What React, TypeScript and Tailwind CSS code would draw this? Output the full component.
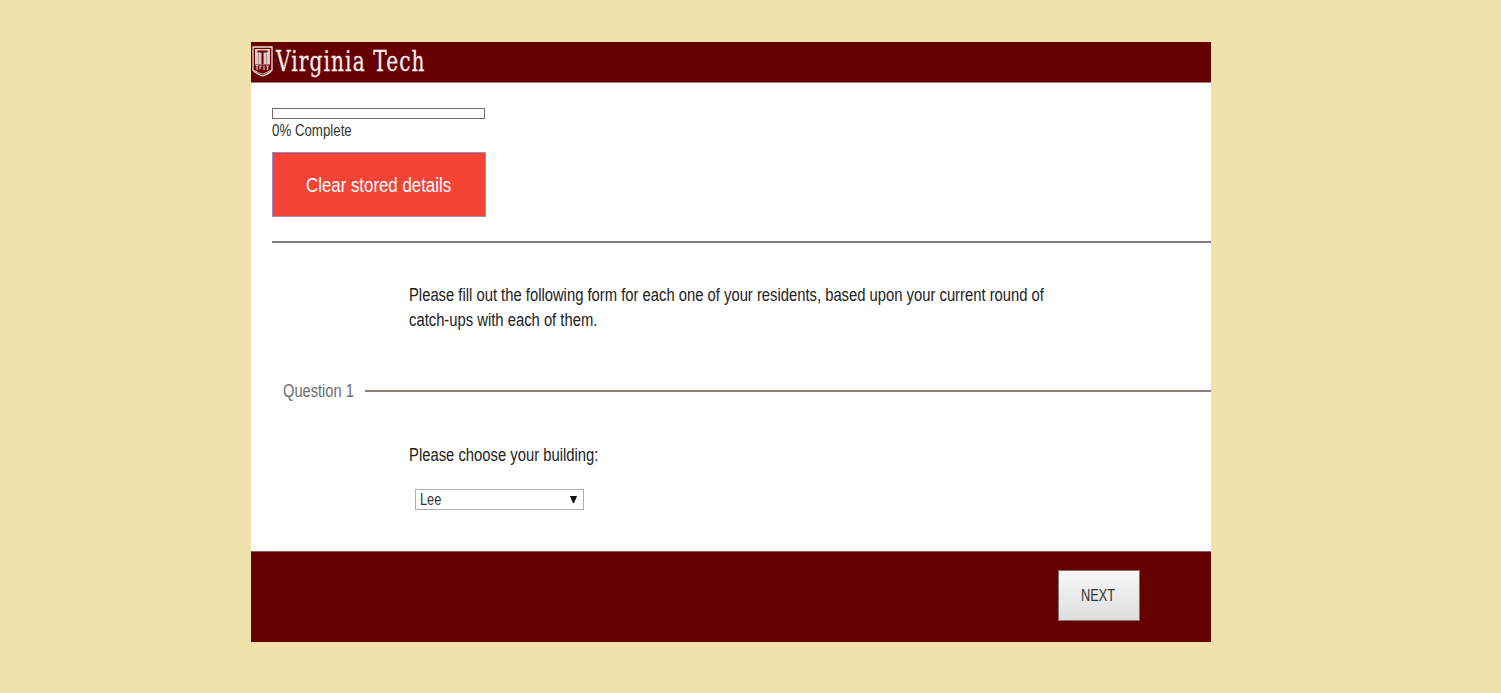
import React, { useState } from "react";

const narrow = "inline-block origin-left whitespace-nowrap";

function Shield() {
  return (
    <svg className="h-[31px] w-[21px] shrink-0" viewBox="0 0 21 31" fill="none">
      <path d="M1 1H20V24Q17 28 10.500 30Q4 28 1 24Z" stroke="#f3dede" strokeWidth="1.300" />
      <path d="M3 3H18V18.500H3Z" fill="#e2c8c8" />
      <path d="M5.500 4.500H15.500V6.500H11.500V18H9.500V6.500H5.500Z" fill="#660000" />
      <path d="M6.500 8V17.500M14.500 8V17.500" stroke="#b98d8d" strokeWidth="1" />
      <path d="M3.500 19.500H6.500M5 19.500V24M8 19.500V23.500M8 20H10M12 19.500V24M14 20H17M15.500 20V24" stroke="#dfc2c2" strokeWidth="1.200" />
      <path d="M3 24.500Q6 27 10.500 28Q15 27 18 24.500" stroke="#d8b8b8" strokeWidth="1" />
    </svg>
  );
}

export default function App() {
  const [building] = useState("Lee");
  return (
    <div className="h-[693px] bg-[#efe2ad] pt-[42px] pl-[251px] font-['Liberation_Sans',Arial,sans-serif] text-[#333]">
      <main className="flex h-[600px] w-[960px] flex-col overflow-hidden bg-white">
        <header className="flex h-[41px] shrink-0 items-start border-b border-[#a58080] bg-[#660000] pt-[4px] pl-px">
          <Shield />
          <h1 className={`${narrow} ml-[3px] -mt-[2px] scale-x-[0.72] font-['DejaVu_Serif',serif] text-[28px] leading-[36px] tracking-[1.5px] text-[#f8eded] [-webkit-text-stroke:0.3px_#f8eded]`}>
            Virginia Tech
          </h1>
        </header>

        <section className="ml-[21px] flex h-[160px] shrink-0 flex-col items-start border-b-2 border-[#8b7b7b] pt-[25px]">
          <div className="h-[11px] w-[213px] border-[1.5px] border-[#806565]" />
          <p className={`${narrow} mt-[3px] scale-x-[0.83] text-[16px] leading-[18px]`}>0% Complete</p>
          <button className="mt-[12px] h-[65px] w-[214px] border border-[#a08bc4] bg-[#f54336] pt-[2px] pl-[33px] text-left text-white">
            <span className={`${narrow} scale-x-[0.842] text-[20px] leading-[24px]`}>Clear stored details</span>
          </button>
        </section>

        <section className="h-[136px] shrink-0 pt-[40px] pl-[158px] text-[18px] leading-[25px] text-[#222]">
          <p className={`${narrow} scale-x-[0.822]`}>
            Please fill out the following form for each one of your residents, based upon your current round of
            <br />
            catch-ups with each of them.
          </p>
        </section>

        <fieldset className="h-[172px] shrink-0">
          <div className="flex h-[24px] items-center pl-[32px] text-[#6e6e6e]">
            <div className="w-[82px]">
              <span className={`${narrow} scale-x-[0.813] text-[18px] leading-[24px]`}>Question 1</span>
            </div>
            <div className="h-[2px] flex-1 bg-[#8b7b7b]" />
          </div>
          <div className="pt-[40px] pl-[158px]">
            <label className={`${narrow} block scale-x-[0.823] text-[18px] leading-[24px] text-[#222]`}>
              Please choose your building:
            </label>
            <button className="mt-[21px] ml-[6px] flex h-[21px] w-[169px] items-center justify-between border-[1.5px] border-[#b0b0b0] bg-white pr-[6px] pl-[4px]">
              <span className={`${narrow} scale-x-[0.8] text-[16px] leading-[18px]`}>{building}</span>
              <svg className="h-[7px] w-[7px]" viewBox="0 0 7 7">
                <path d="M0 0H7L4.200 7H2.800Z" fill="#111" />
              </svg>
            </button>
          </div>
        </fieldset>

        <footer className="flex flex-1 items-start justify-end bg-[#660000] pt-[19px] pr-[71px] shadow-[inset_0_1px_0_#8a6060]">
          <button className="h-[51px] w-[82px] border border-[#8d7070] bg-linear-to-b from-[#f7f7f7] to-[#dedede] pl-[22px] text-left">
            <span className={`${narrow} scale-x-[0.8] text-[16px] leading-[20px]`}>NEXT</span>
          </button>
        </footer>
      </main>
    </div>
  );
}
